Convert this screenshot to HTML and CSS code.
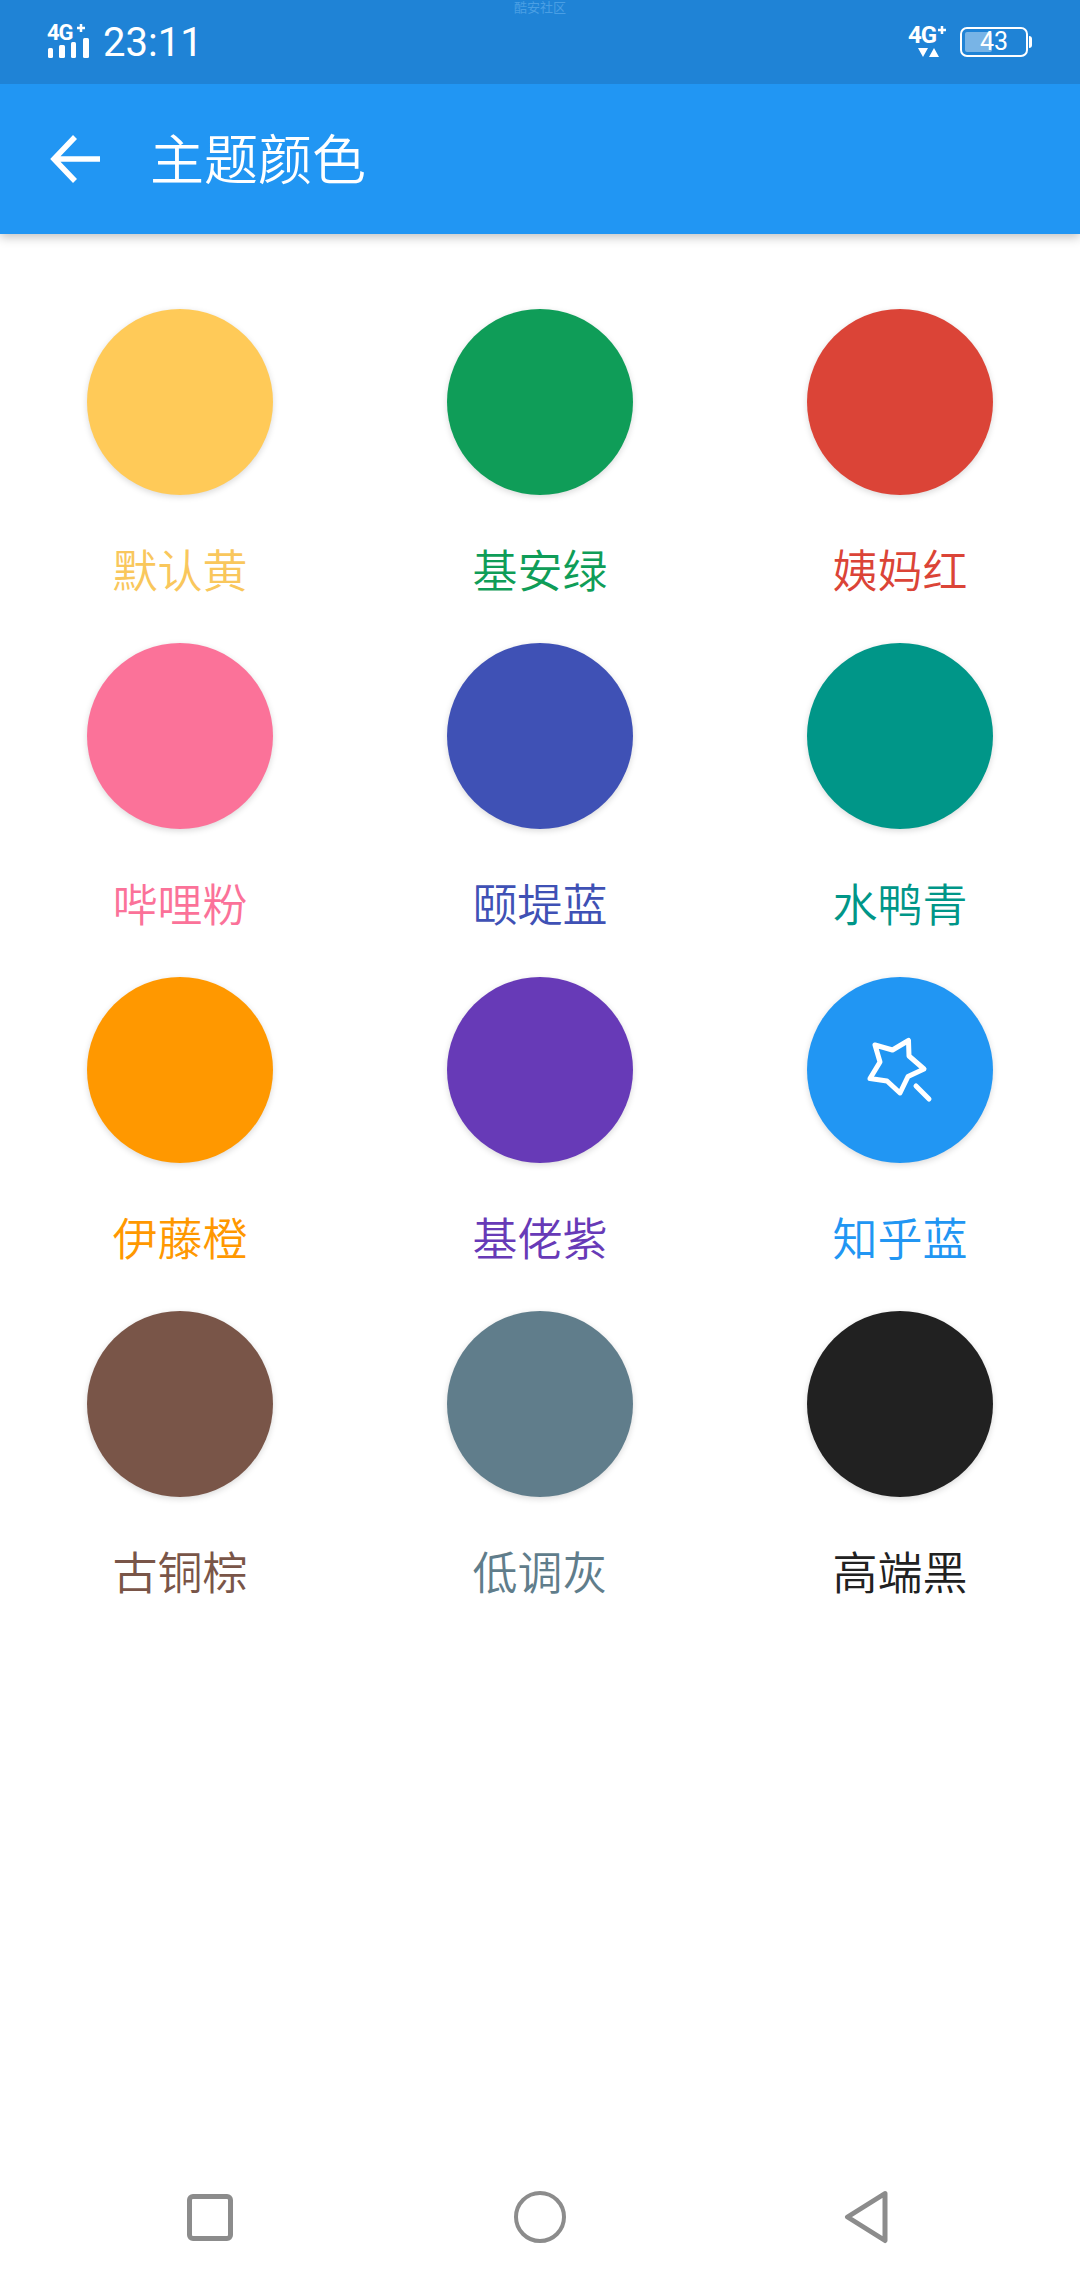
FILE: index.html
```html
<!DOCTYPE html>
<html lang="zh">
<head>
    <meta charset="UTF-8">
    <meta name="viewport" content="width=device-width, initial-scale=1.0">
    <title>主题颜色</title>
    <link rel="stylesheet" href="styles.css">
</head>
<body>
    <div class="status-bar">
        <div class="status-left">
            <svg class="signal" viewBox="0 -6 44 48" width="44" height="48">
                <rect x="1" y="24" width="5" height="10" rx="1.5"/>
                <rect x="12" y="21" width="6" height="13" rx="1.5"/>
                <rect x="24" y="18" width="5" height="16" rx="1.5"/>
                <rect x="36" y="14" width="6" height="20" rx="1.5"/>
                <text x="0" y="16" class="net-text">4G</text>
                <path d="M30 4h8M34 0v8" stroke="#fff" stroke-width="2.500" fill="none"/>
            </svg>
            <span class="clock">23:11</span>
        </div>
        <span class="watermark">酷安社区</span>
        <div class="status-right">
            <svg class="signal" viewBox="0 -6 40 48" width="40" height="48">
                <text x="1" y="19" class="net-text net-large">4G</text>
                <path d="M31 6h8M35 2v8" stroke="#fff" stroke-width="2.500" fill="none"/>
                <path d="M11 24h10l-5 9zM22 33h10l-5-9z" fill="#fff"/>
            </svg>
            <div class="battery">
                <div class="battery-fill"></div>
                <span class="battery-num">43</span>
            </div>
            <div class="battery-tip"></div>
        </div>
    </div>

    <header class="toolbar">
        <svg class="back" viewBox="0 0 50 50" width="50" height="50">
            <path d="M50 25H5M25 3L4 25l21 22" stroke="#fff" stroke-width="5.500" fill="none"/>
        </svg>
        <h1>主题颜色</h1>
    </header>

    <main class="theme-grid">
        <div class="theme-item yellow"><div class="dot"></div><span>默认黄</span></div>
        <div class="theme-item green"><div class="dot"></div><span>基安绿</span></div>
        <div class="theme-item red"><div class="dot"></div><span>姨妈红</span></div>
        <div class="theme-item pink"><div class="dot"></div><span>哔哩粉</span></div>
        <div class="theme-item indigo"><div class="dot"></div><span>颐堤蓝</span></div>
        <div class="theme-item teal"><div class="dot"></div><span>水鸭青</span></div>
        <div class="theme-item orange"><div class="dot"></div><span>伊藤橙</span></div>
        <div class="theme-item purple"><div class="dot"></div><span>基佬紫</span></div>
        <div class="theme-item blue">
            <div class="dot">
                <svg viewBox="0 0 66 66" width="66" height="66">
                    <path d="M8 8l17.500 5 16-9.500.500 15.500 15 13-16 7.500-8 16.500-13-12-17-2.500 10-16.500z" stroke="#fff" stroke-width="5" stroke-linejoin="round" fill="none"/>
                    <path d="M49 49l13 13" stroke="#fff" stroke-width="5" stroke-linecap="round"/>
                </svg>
            </div>
            <span>知乎蓝</span>
        </div>
        <div class="theme-item brown"><div class="dot"></div><span>古铜棕</span></div>
        <div class="theme-item grey"><div class="dot"></div><span>低调灰</span></div>
        <div class="theme-item black"><div class="dot"></div><span>高端黑</span></div>
    </main>

    <nav class="nav-bar">
        <div class="nav-square"></div>
        <div class="nav-circle"></div>
        <svg class="nav-back" viewBox="0 0 46 54" width="46" height="54">
            <path d="M41 3.500L3.500 27 41 50.500z" stroke="#8c8c8c" stroke-width="5" stroke-linejoin="round" fill="none"/>
        </svg>
    </nav>
</body>
</html>
```

FILE: styles.css
```css
* {
    box-sizing: border-box;
}
body {
    margin: 0;
    width: 1080px;
    height: 2280px;
    display: flex;
    flex-direction: column;
    font-family: "Noto Sans CJK SC", "Noto Sans", sans-serif;
    background-color: white;
    overflow: hidden;
}

.status-bar {
    height: 84px;
    padding: 0 48px 0 47px;
    display: flex;
    justify-content: space-between;
    align-items: center;
    position: relative;
    z-index: 1;
    background-color: #1f83d6;
    color: white;
}
.status-left,
.status-right {
    display: flex;
    align-items: center;
}
.status-left {
    gap: 12px;
}
.signal {
    fill: white;
}
.net-text {
    font-family: "Roboto", sans-serif;
    font-size: 22px;
    font-weight: 700;
    letter-spacing: -1px;
}
.net-large {
    font-size: 24px;
}
.clock {
    font-family: "Roboto", sans-serif;
    font-size: 40px;
    font-weight: 400;
}
.watermark {
    position: absolute;
    left: 514px;
    top: 0;
    font-size: 13px;
    line-height: 14px;
    color: #4a9fe4;
}
.battery {
    width: 68px;
    height: 30px;
    margin-left: 13px;
    border: 2.5px solid white;
    border-radius: 7px;
    padding: 3px;
    position: relative;
}
.battery-fill {
    width: 27px;
    height: 100%;
    border-radius: 2px;
    background-color: rgba(255, 255, 255, 0.4);
}
.battery-num {
    position: absolute;
    inset: 0;
    text-align: center;
    font-family: "Roboto", sans-serif;
    font-size: 25px;
    line-height: 25px;
    font-weight: 400;
}
.battery-tip {
    width: 3px;
    height: 12px;
    margin-left: 1px;
    border-radius: 0 3px 3px 0;
    background-color: white;
}

.toolbar {
    height: 150px;
    padding-left: 50px;
    display: flex;
    align-items: center;
    gap: 50px;
    background-color: #2196f3;
    color: white;
    box-shadow: 0 3px 10px rgba(0, 0, 0, 0.25);
    position: relative;
}
.toolbar h1 {
    margin: 0;
    padding-bottom: 6px;
    font-size: 54px;
    font-weight: 350;
}

.theme-grid {
    flex: 1;
    padding-top: 75px;
    display: grid;
    grid-template-columns: repeat(3, 360px);
    grid-auto-rows: 334px;
}
.theme-item {
    display: flex;
    flex-direction: column;
    align-items: center;
    gap: 44px;
    font-size: 45px;
    font-weight: 350;
    line-height: 59px;
}
.dot {
    width: 186px;
    height: 186px;
    border-radius: 50%;
    display: flex;
    align-items: center;
    justify-content: center;
    box-shadow: 0 2px 6px rgba(0, 0, 0, 0.15);
}
.yellow { color: #f9c75c; }
.yellow .dot { background-color: #ffca58; }
.green { color: #0f9d58; }
.green .dot { background-color: #0f9d58; }
.red { color: #db4437; }
.red .dot { background-color: #db4437; }
.pink { color: #fb7299; }
.pink .dot { background-color: #fb7299; }
.indigo { color: #3f51b5; }
.indigo .dot { background-color: #3f51b5; }
.teal { color: #009688; }
.teal .dot { background-color: #009688; }
.orange { color: #ff9800; }
.orange .dot { background-color: #ff9800; }
.purple { color: #673ab7; }
.purple .dot { background-color: #673ab7; }
.blue { color: #2196f3; }
.blue .dot { background-color: #2196f3; }
.brown { color: #795548; }
.brown .dot { background-color: #795548; }
.grey { color: #607d8b; }
.grey .dot { background-color: #607d8b; }
.black { color: #212121; }
.black .dot { background-color: #212121; }

.nav-bar {
    height: 120px;
    padding: 0 0 6px 187px;
    display: flex;
    align-items: center;
}
.nav-square {
    width: 46px;
    height: 47px;
    border: 5px solid #8c8c8c;
    border-radius: 6px;
}
.nav-circle {
    width: 52px;
    height: 52px;
    margin: 0 278px 0 281px;
    border: 4px solid #8c8c8c;
    border-radius: 50%;
}
```
